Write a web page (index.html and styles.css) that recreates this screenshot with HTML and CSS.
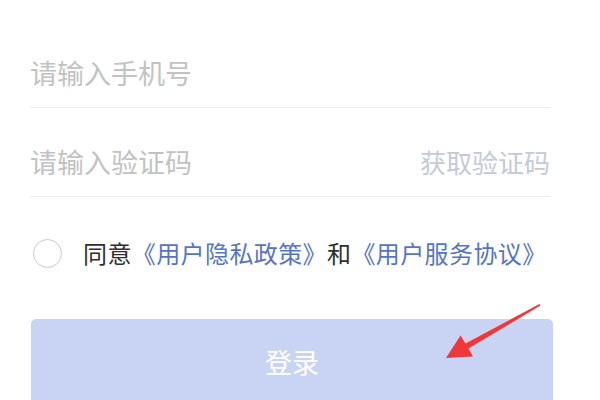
FILE: index.html
```html
<!DOCTYPE html>
<html lang="zh-CN">
<head>
    <meta charset="UTF-8">
    <meta name="viewport" content="width=device-width, initial-scale=1.0">
    <title>登录</title>
    <link rel="stylesheet" href="styles.css">
</head>
<body>
    <div class="login">
        <div class="field">
            <span class="placeholder">请输入手机号</span>
        </div>
        <div class="field">
            <span class="placeholder">请输入验证码</span>
            <span class="get-code">获取验证码</span>
        </div>

        <div class="agree">
            <span class="radio"></span>
            <span class="agree-text">同意<a class="link">《用户隐私政策》</a>和<a class="link">《用户服务协议》</a></span>
        </div>

        <button class="btn-login">登录</button>
    </div>

    <!-- flecha roja de anotación -->
    <svg class="arrow" width="600" height="400" viewBox="0 0 600 400">
        <polygon points="539.5,304 465.5,343.5 460.5,335.5 446,358 473,356.5 468.5,348.5 540.5,305.6" fill="#f03838"/>
    </svg>
</body>
</html>
```

FILE: styles.css
```css
* {
    margin: 0;
    padding: 0;
    box-sizing: border-box;
}

body {
    font-family: "Noto Sans CJK SC", "Noto Sans", sans-serif;
    background-color: #ffffff;
    color: #333333;
    width: 600px;
    height: 400px;
    overflow: hidden;
    position: relative;
}

.login {
    width: 522px;
    margin-left: 30px;
    padding-top: 19px;
}

.field {
    display: flex;
    justify-content: space-between;
    align-items: center;
    height: 89px;
    padding: 40px 0 20px;
    line-height: 28px;
    border-bottom: 1px solid #e9e9ec;
    margin-right: 2px;
}

.placeholder {
    font-size: 27px;
    color: #c2c2c2;
}

.get-code {
    font-size: 26px;
    color: #c4c9da;
}

.agree {
    display: flex;
    align-items: center;
    height: 30px;
    margin-top: 41px;
}

.radio {
    width: 29px;
    height: 29px;
    border: 1.5px solid #cbcbcb;
    border-radius: 50%;
    margin-left: 3px;
    margin-right: 21px;
}

.agree-text {
    font-size: 24px;
    letter-spacing: 0.4px;
    line-height: 30px;
    color: #2f2f2f;
}

.link {
    color: #5474cc;
}

.btn-login {
    display: block;
    width: 522px;
    height: 86px;
    margin-top: 51px;
    margin-left: 1px;
    border: none;
    border-radius: 5px;
    background-color: #c9d4f5;
    color: #ffffff;
    font-family: inherit;
    font-size: 27px;
    line-height: 86px;
}

.arrow {
    position: absolute;
    left: 0;
    top: 0;
}
```
